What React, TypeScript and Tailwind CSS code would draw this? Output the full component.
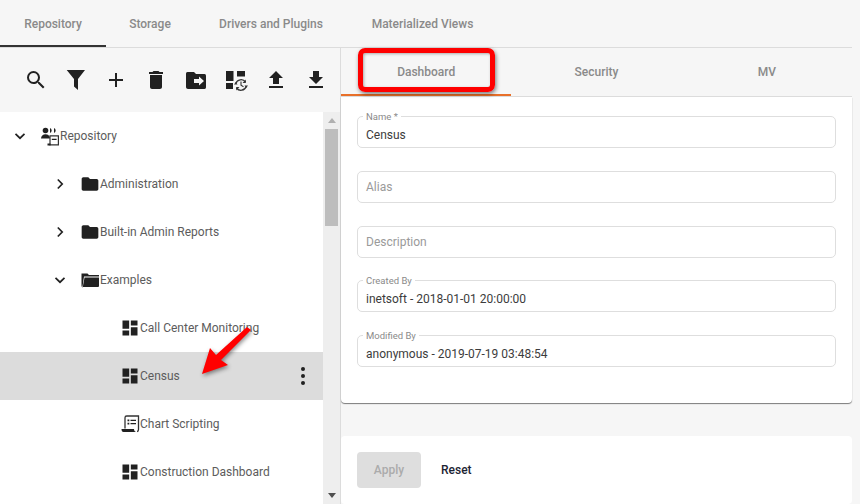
import type { ReactNode } from "react";

function Icon({ d, size = 24 }: { d: string; size?: number }) {
  return (
    <svg className="shrink-0" width={size} height={size} viewBox="0 0 24 24" fill="#212121">
      <path d={d} />
    </svg>
  );
}

const DASHBOARD = "M3 13h8V3H3v10zm0 8h8v-6H3v6zm10 0h8V11h-8v10zm0-18v6h8V3h-8z";
const FOLDER =
  "M10 4H4c-1.1 0-1.99.9-1.99 2L2 18c0 1.1.9 2 2 2h16c1.1 0 2-.9 2-2V8c0-1.1-.9-2-2-2h-8l-2-2z";

function HistoryDashboard() {
  return (
    <svg className="shrink-0" width="24" height="24" viewBox="0 0 24 24">
      <path fill="#212121" d="M2 3h7.500v10H2zM2 15h7v6H2zM13 3h8v5.500h-8zM13 3" />
      <circle cx="17" cy="17" r="7.500" fill="#f6f6f6" />
      <path
        d="M11.800 15.500A5.500 5.500 0 0 1 21.500 14M22.200 18.500A5.500 5.500 0 0 1 12.500 20"
        fill="none"
        stroke="#333"
        strokeWidth="1.300"
      />
      <path d="M10 16.500l3.500 0-1.700-2.500zM24 17.500l-3.500 0 1.700 2.500zM21.800 11.500v3.500h-3.300zM12.200 22.500v-3.500h3.300z" fill="#333" />
      <path d="M17 13.500v3.800l2.500 1.500" fill="none" stroke="#333" strokeWidth="1.100" />
    </svg>
  );
}

function FolderMove() {
  return (
    <svg className="shrink-0" width="24" height="24" viewBox="0 0 24 24">
      <path
        fill="#212121"
        fillRule="evenodd"
        d="M10 4H3.500C2.400 4 2 4.900 2 6v13c0 1.100.9 2 2 2h16.500c1.100 0 1.500-.9 1.500-2V8c0-1.100-.4-2-1.500-2H12zM15 8.500l5 4.500-5 4.500V15h-5v-4h5z"
      />
    </svg>
  );
}

function FolderOpen() {
  return (
    <svg className="shrink-0" width="20" height="20" viewBox="0 0 20 20">
      <path fill="#212121" d="M1.500 3.500h6l1.500 1.500h10v1.500H4L2.500 16.500h-1z" />
      <path fill="#212121" d="M4.500 7.500H19v8.500a1 1 0 0 1-1 1H2.800z" />
      <path fill="#888" d="M1.500 16.500h1.500v1H2.500z" />
    </svg>
  );
}

function RepoIcon() {
  return (
    <svg className="shrink-0" width="20" height="20" viewBox="0 0 20 20">
      <circle cx="5.500" cy="4.500" r="2.800" fill="#212121" />
      <path fill="#212121" d="M1 12.500c0-2.700 2-4.300 4.500-4.300S9 9.500 9.800 11v1.500H1z" />
      <path fill="#212121" d="M10 2a2.700 2.700 0 0 1 0 5zM14 2a2.700 2.700 0 0 1 0 5z" />
      <path fill="none" stroke="#333" strokeWidth="1.200" d="M10 9.800h8.400v9H10z" />
      <path fill="#212121" d="M7.500 17.500h3v2h-3zM11.800 12.800h4.800v1.200h-4.800z" />
    </svg>
  );
}

function ScriptIcon() {
  return (
    <svg className="shrink-0" width="20" height="20" viewBox="0 0 20 20">
      <path
        fill="none"
        stroke="#333"
        strokeWidth="1.300"
        d="M5 14.500V3.800c0-1 .7-1.800 1.700-1.800H18.500v13.500c0 1.500-.6 2-1.500 2"
      />
      <path fill="#212121" d="M1.500 15h12.500c0 1.600.8 2.500 2 3H3.500c-1.300 0-2-1.300-2-3z" />
      <path
        fill="#212121"
        d="M7.500 5.500h1.800v1.800H7.500zM10.500 5.800h5.500v1.200h-5.500zM7.500 8.800h1.800v1.800H7.500zM10.500 9.100h5.500v1.200h-5.500z"
      />
    </svg>
  );
}

function Chevron({ open }: { open: boolean }) {
  return (
    <svg width="16" height="16" viewBox="0 0 16 16" fill="none" stroke="#212121" strokeWidth="1.700">
      <path d={open ? "M3.500 5.800 8 10.200l4.500-4.400" : "M5.800 3.500 10.200 8l-4.400 4.500"} />
    </svg>
  );
}

function TreeRow({
  level,
  icon,
  label,
  open,
  selected,
}: {
  level: number;
  icon: ReactNode;
  label: string;
  open?: boolean;
  selected?: boolean;
}) {
  return (
    <div className={`flex h-12 items-center ${selected ? "bg-[#dcdcdc]" : ""}`}>
      <div className={level === 0 ? "w-0" : level === 1 ? "w-10" : "w-20"} />
      <div className="flex w-10 justify-center">
        {open !== undefined && <Chevron open={open} />}
      </div>
      <div className="flex w-5 justify-center">{icon}</div>
      <span className="text-xs text-[#5c5c5c]">{label}</span>
      {selected && (
        <div className="ml-auto mr-[18px] flex flex-col gap-[3px]">
          <div className="h-1 w-1 rounded-full bg-[#212121]" />
          <div className="h-1 w-1 rounded-full bg-[#212121]" />
          <div className="h-1 w-1 rounded-full bg-[#212121]" />
        </div>
      )}
    </div>
  );
}

function Field({ label, value, placeholder }: { label?: string; value?: string; placeholder?: string }) {
  return (
    <div className="relative flex h-8 items-center rounded-[5px] border border-[#dedede] px-2 text-xs">
      {label && (
        <span className="absolute -top-[6px] left-[5px] bg-white px-[3px] text-[9.500px] leading-3 text-[#8a8a8a]">
          {label}
        </span>
      )}
      {value ? (
        <span className="pt-[5px] text-[#3c3c3c]">{value}</span>
      ) : (
        <span className="text-[#9a9a9a]">{placeholder}</span>
      )}
    </div>
  );
}

export default function App() {
  return (
    <div className="relative h-[504px] w-[860px] overflow-hidden bg-[#f6f6f6] font-['Roboto',sans-serif]">
      <nav className="mr-2 flex h-12 border-b border-[#dcdcdc] text-xs font-medium text-[#8a8a8a]">
        <div className="flex w-[106px] items-center justify-center shadow-[inset_0_-2px_0_#333]">Repository</div>
        <div className="flex w-[88px] items-center justify-center">Storage</div>
        <div className="flex w-[154px] items-center justify-center">Drivers and Plugins</div>
        <div className="flex w-[149px] items-center justify-center">Materialized Views</div>
      </nav>

      <div className="flex h-[456px]">
        <aside className="flex w-[341px] shrink-0 flex-col border-r border-[#dcdcdc]">
          <div className="flex h-16 shrink-0 items-center gap-4 pl-6">
            <Icon d="M15.500 14h-.79l-.28-.27A6.470 6.470 0 0 0 16 9.500 6.500 6.500 0 1 0 9.500 16c1.610 0 3.090-.59 4.230-1.570l.27.28v.79l5 4.990L20.490 19l-4.990-5zm-6 0C7.010 14 5 11.990 5 9.500S7.010 5 9.500 5 14 7.010 14 9.500 11.990 14 9.500 14z" />
            <Icon d="M2.700 2h18.300l-7 9v11l-4-3.500V11z" />
            <Icon d="M19 13h-6v6h-2v-6H5v-2h6V5h2v6h6v2z" />
            <Icon d="M6 19c0 1.100.9 2 2 2h8c1.100 0 2-.9 2-2V7H6v12zM19 4h-3.500l-1-1h-5l-1 1H5v2h14V4z" />
            <FolderMove />
            <HistoryDashboard />
            <Icon d="M9 16h6v-6h4l-7-7-7 7h4zm-4 2h14v2H5z" />
            <Icon d="M19 9h-4V3H9v6H5l7 7 7-7zM5 18v2h14v-2H5z" />
          </div>

          <div className="flex min-h-0 flex-1">
            <div className="w-[323px] bg-white">
              <TreeRow level={0} open icon={<RepoIcon />} label="Repository" />
              <TreeRow level={1} open={false} icon={<Icon d={FOLDER} size={20} />} label="Administration" />
              <TreeRow level={1} open={false} icon={<Icon d={FOLDER} size={20} />} label="Built-in Admin Reports" />
              <TreeRow level={1} open icon={<FolderOpen />} label="Examples" />
              <TreeRow level={2} icon={<Icon d={DASHBOARD} size={20} />} label="Call Center Monitoring" />
              <TreeRow level={2} selected icon={<Icon d={DASHBOARD} size={20} />} label="Census" />
              <TreeRow level={2} icon={<ScriptIcon />} label="Chart Scripting" />
              <TreeRow level={2} icon={<Icon d={DASHBOARD} size={20} />} label="Construction Dashboard" />
            </div>
            <div className="flex flex-1 flex-col items-center bg-[#eeeeee] px-0.5">
              <div className="mt-[6px] h-0 w-0 border-x-[4px] border-b-[5px] border-x-transparent border-b-[#b0b0b0]" />
              <div className="mt-[6px] h-[97px] w-full bg-[#bdbdbd]" />
              <div className="mt-auto mb-[6px] h-0 w-0 border-x-[4px] border-t-[5px] border-x-transparent border-t-[#505050]" />
            </div>
          </div>
        </aside>

        <main className="mr-2 flex min-w-0 flex-1 flex-col">
          <div className="flex h-[49px] shrink-0 border-b border-[#dcdcdc] text-xs font-medium text-[#8a8a8a]">
            <div className="flex flex-1 items-center justify-center shadow-[inset_0_-2px_0_#e8702a]">Dashboard</div>
            <div className="flex flex-1 items-center justify-center">Security</div>
            <div className="flex flex-1 items-center justify-center">MV</div>
          </div>

          <section className="flex h-[306px] flex-col gap-[22.800px] rounded-b-[4px] bg-white px-4 pt-[19px] shadow-[0_1px_1px_rgba(0,0,0,0.5)]">
            <Field label="Name *" value="Census" />
            <Field placeholder="Alias" />
            <Field placeholder="Description" />
            <Field label="Created By" value="inetsoft - 2018-01-01 20:00:00" />
            <Field label="Modified By" value="anonymous - 2019-07-19 03:48:54" />
          </section>

          <div className="mt-[33px] flex h-[68px] items-center gap-[20px] rounded-[4px] bg-white px-4 text-xs font-medium">
            <button className="h-9 w-16 rounded-[4px] bg-[#dedede] text-[#ababab]">Apply</button>
            <button className="text-[#1c2433]">Reset</button>
          </div>
        </main>
      </div>

      <div className="absolute left-[358px] top-[48px] h-[44px] w-[137px] rounded-[7px] border-[5px] border-[#ff0000] shadow-[1px_2px_4px_rgba(0,0,0,0.5),inset_1px_1px_3px_rgba(0,0,0,0.3)]" />
      <svg
        className="absolute left-[195px] top-[320px] drop-shadow-[1px_2px_2px_rgba(0,0,0,0.45)]"
        width="62"
        height="62"
        viewBox="195 320 62 62"
      >
        <path fill="#ff0000" d="M202 374l8-26 6 7 31-28 4 3-30 30 7 5z" />
      </svg>
    </div>
  );
}
